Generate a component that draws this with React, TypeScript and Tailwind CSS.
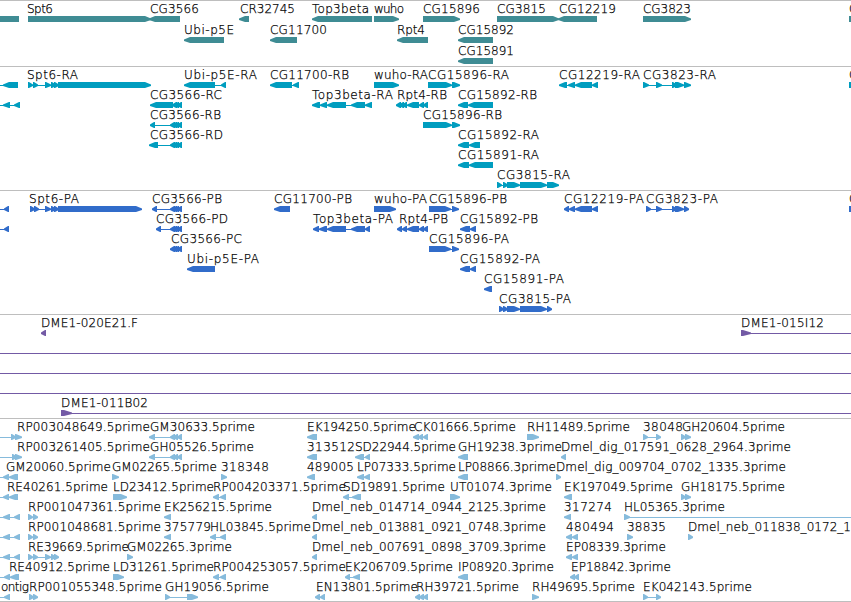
type Label = [x: number, width: number, text: string];
type Feature = [dir: 'l' | 'r' | 'n', ...exons: number[]];

interface Row {
  labels: Label[];
  features: Feature[];
}

interface Track {
  name: string;
  color: string;
  rowHeight: number;
  pad: number;
  tip: number;
  rows: Row[];
}

const TRACKS: Track[] = [
  {
    name: 'genes',
    color: '#3f8c94',
    rowHeight: 21,
    pad: 3,
    tip: 6,
    rows: [
      {
        labels: [[27, 26, 'Spt6'], [150, 49, 'CG3566'], [240, 55, 'CR32745'], [312, 57, 'Top3beta'], [374, 30, 'wuho'], [423, 57, 'CG15896'], [497, 49, 'CG3815'], [559, 57, 'CG12219'], [643, 48, 'CG3823'], [849, 8, 'C']],
        features: [['n', -10, 19], ['r', 28, 151], ['l', 149, 180], ['l', 239, 249], ['l', 312, 372], ['r', 374, 399], ['r', 423, 460], ['r', 497, 559], ['l', 558, 597], ['r', 643, 691], ['n', 849, 860]],
      },
      {
        labels: [[184, 50, 'Ubi-p5E'], [270, 57, 'CG11700'], [397, 28, 'Rpt4'], [458, 56, 'CG15892']],
        features: [['l', 184, 224], ['l', 270, 297], ['l', 397, 428], ['l', 458, 493]],
      },
      {
        labels: [[458, 56, 'CG15891']],
        features: [['l', 458, 493]],
      },
    ],
  },
  {
    name: 'transcripts',
    color: '#009dbf',
    rowHeight: 20,
    pad: 4,
    tip: 6,
    rows: [
      {
        labels: [[27, 51, 'Spt6-RA'], [184, 73, 'Ubi-p5E-RA'], [270, 79, 'CG11700-RB'], [374, 54, 'wuho-RA'], [428, 81, 'CG15896-RA'], [559, 81, 'CG12219-RA'], [643, 73, 'CG3823-RA'], [849, 8, 'C']],
        features: [['l', -6, -1, 3, 18], ['r', 28, 33, 33, 38, 45, 51, 51, 54, 54, 58, 58, 151], ['l', 184, 215, 221, 226], ['l', 270, 292, 293, 299], ['r', 374, 399], ['r', 428, 452, 452, 460], ['l', 559, 567, 568, 575, 575, 592, 592, 598], ['r', 643, 649, 656, 662, 672, 676, 675, 684, 684, 691], ['r', 849, 858]],
      },
      {
        labels: [[150, 72, 'CG3566-RC'], [312, 81, 'Top3beta-RA'], [397, 50, 'Rpt4-RB'], [458, 79, 'CG15892-RB']],
        features: [['l', -6, -1, 3, 10, 14, 20], ['l', 150, 173, 173, 177, 177, 179, 179, 182], ['l', 312, 320, 320, 327, 327, 346, 351, 365, 365, 372], ['l', 397, 401, 401, 404, 404, 407, 407, 419, 419, 424, 424, 428], ['l', 458, 468, 468, 493]],
      },
      {
        labels: [[150, 71, 'CG3566-RB'], [423, 79, 'CG15896-RB']],
        features: [['l', 150, 155, 171, 175, 175, 177, 177, 179, 179, 182], ['r', 423, 452, 452, 460]],
      },
      {
        labels: [[150, 73, 'CG3566-RD'], [458, 81, 'CG15892-RA']],
        features: [['l', 149, 158, 171, 175, 175, 177, 177, 179, 179, 182], ['l', 458, 469, 469, 480]],
      },
      {
        labels: [[458, 81, 'CG15891-RA']],
        features: [['l', 458, 469, 469, 493]],
      },
      {
        labels: [[497, 73, 'CG3815-RA']],
        features: [['r', 497, 502, 503, 507, 507, 520, 520, 547, 547, 559]],
      },
    ],
  },
  {
    name: 'proteins',
    color: '#316cca',
    rowHeight: 20,
    pad: 4,
    tip: 6,
    rows: [
      {
        labels: [[29, 50, 'Spt6-PA'], [152, 70, 'CG3566-PB'], [274, 78, 'CG11700-PB'], [374, 53, 'wuho-PA'], [429, 78, 'CG15896-PB'], [564, 80, 'CG12219-PA'], [646, 72, 'CG3823-PA'], [849, 8, 'C']],
        features: [['l', -5, -1, 4, 9], ['r', 30, 34, 34, 38, 45, 51, 51, 54, 54, 58, 58, 142], ['l', 152, 157, 171, 175, 175, 177, 177, 179, 179, 182], ['l', 274, 290], ['r', 374, 396], ['r', 429, 451, 452, 459], ['l', 564, 569, 569, 575, 575, 592, 592, 598], ['r', 646, 651, 656, 662, 672, 676, 675, 684, 684, 689], ['r', 849, 858]],
      },
      {
        labels: [[156, 72, 'CG3566-PD'], [313, 80, 'Top3beta-PA'], [399, 49, 'Rpt4-PB'], [460, 78, 'CG15892-PB']],
        features: [['l', -5, -1, 4, 9], ['l', 156, 161, 171, 175, 175, 177, 177, 179, 179, 182], ['l', 313, 319, 319, 327, 327, 346, 351, 365, 365, 370], ['l', 399, 402, 402, 407, 407, 419, 419, 424, 424, 428], ['l', 460, 470, 470, 476]],
      },
      {
        labels: [[171, 71, 'CG3566-PC'], [429, 80, 'CG15896-PA']],
        features: [['l', 171, 175, 175, 177, 177, 179, 179, 182], ['r', 429, 451, 452, 459]],
      },
      {
        labels: [[187, 72, 'Ubi-p5E-PA'], [460, 80, 'CG15892-PA']],
        features: [['l', 187, 215], ['l', 460, 470, 470, 476]],
      },
      {
        labels: [[484, 80, 'CG15891-PA']],
        features: [['l', 484, 492]],
      },
      {
        labels: [[499, 72, 'CG3815-PA']],
        features: [['r', 499, 503, 503, 507, 507, 520, 520, 547, 547, 552]],
      },
    ],
  },
  {
    name: 'clones',
    color: '#735aa5',
    rowHeight: 20,
    pad: 4,
    tip: 8,
    rows: [
      {
        labels: [[41, 97, 'DME1-020E21.F'], [741, 83, 'DME1-015I12']],
        features: [['l', 41, 46], ['r', 741, 751, 870, 880]],
      },
      { labels: [], features: [['n', -20, -10, 870, 880]] },
      { labels: [], features: [['n', -20, -10, 870, 880]] },
      { labels: [], features: [['n', -20, -10, 870, 880]] },
      {
        labels: [[61, 87, 'DME1-011B02']],
        features: [['r', 61, 72, 870, 880]],
      },
    ],
  },
  {
    name: 'ests',
    color: '#86bbdc',
    rowHeight: 20,
    pad: 3,
    tip: 6,
    rows: [
      {
        labels: [[17, 133, 'RP003048649.5prime'], [150, 105, 'GM30633.5prime'], [307, 109, 'EK194250.5prime'], [414, 102, 'CK01666.5prime'], [527, 103, 'RH11489.5prime'], [643, 40, '38048'], [682, 103, 'GH20604.5prime']],
        features: [['r', -10, -4, 11, 15, 15, 22], ['l', 149, 155, 171, 175, 175, 178, 178, 182], ['l', 307, 317], ['l', 413, 419, 419, 423, 423, 428], ['r', 527, 539], ['r', 643, 648, 656, 661], ['r', 681, 685, 685, 691]],
      },
      {
        labels: [[17, 133, 'RP003261405.5prime'], [150, 104, 'GH05526.5prime'], [307, 48, '313512'], [355, 101, 'SD22944.5prime'], [458, 104, 'GH19238.3prime'], [561, 230, 'Dmel_dig_017591_0628_2964.3prime']],
        features: [['r', -10, -4, 12, 15, 15, 22], ['l', 149, 155, 171, 175, 175, 178, 178, 182], ['l', 307, 317], ['l', 355, 364, 365, 370], ['l', 458, 468], ['l', 561, 566]],
      },
      {
        labels: [[6, 105, 'GM20060.5prime'], [112, 105, 'GM02265.5prime'], [221, 48, '318348'], [307, 47, '489005'], [357, 99, 'LP07333.5prime'], [458, 98, 'LP08866.3prime'], [556, 230, 'Dmel_dig_009704_0702_1335.3prime']],
        features: [['l', -10, -4, 3, 9, 9, 18], ['r', 112, 119], ['r', 221, 227], ['l', 307, 315], ['l', 357, 364, 364, 370], ['l', 458, 468], ['r', 556, 561]],
      },
      {
        labels: [[7, 101, 'RE40261.5prime'], [113, 101, 'LD23412.5prime'], [213, 133, 'RP004203371.5prime'], [343, 102, 'SD19891.5prime'], [450, 102, 'UT01074.3prime'], [564, 109, 'EK197049.5prime'], [681, 104, 'GH18175.5prime']],
        features: [['l', -10, -4, 3, 9, 9, 18], ['r', 113, 127], ['l', 213, 219, 220, 226], ['l', 343, 349, 352, 361], ['r', 450, 460], ['l', 564, 572], ['r', 681, 685, 685, 691]],
      },
      {
        labels: [[28, 133, 'RP001047361.5prime'], [164, 108, 'EK256215.5prime'], [312, 234, 'Dmel_neb_014714_0944_2125.3prime'], [564, 48, '317274'], [624, 101, 'HL05365.3prime']],
        features: [['l', -10, -4, 3, 10, 14, 20], ['r', 28, 33, 33, 38], ['l', 164, 171], ['l', 312, 317], ['l', 564, 571], ['r', 624, 630, 870, 880]],
      },
      {
        labels: [[28, 133, 'RP001048681.5prime'], [164, 47, '375779'], [210, 101, 'HL03845.5prime'], [312, 234, 'Dmel_neb_013881_0921_0748.3prime'], [566, 48, '480494'], [627, 39, '38835'], [688, 163, 'Dmel_neb_011838_0172_1']],
        features: [['l', -10, -4, 3, 10, 14, 20], ['r', 28, 33, 33, 38], ['l', 164, 171], ['l', 210, 216, 220, 226], ['l', 312, 317], ['l', 566, 572, 572, 578], ['r', 627, 633], ['r', 688, 693]],
      },
      {
        labels: [[28, 101, 'RE39669.5prime'], [127, 105, 'GM02265.3prime'], [312, 234, 'Dmel_neb_007691_0898_3709.3prime'], [566, 100, 'EP08339.3prime']],
        features: [['l', -10, -4, 3, 10, 14, 20], ['r', 28, 33, 33, 38, 45, 51, 51, 54, 54, 59], ['r', 127, 133], ['l', 312, 317], ['l', 566, 572, 572, 578]],
      },
      {
        labels: [[9, 101, 'RE40912.5prime'], [113, 101, 'LD31261.5prime'], [213, 133, 'RP004253057.5prime'], [345, 108, 'EK206709.5prime'], [458, 96, 'IP08920.3prime'], [571, 100, 'EP18842.3prime']],
        features: [['l', -10, -4, 4, 10, 10, 19], ['r', 113, 124], ['l', 213, 219, 220, 226], ['l', 345, 350, 353, 360], ['l', 458, 468], ['l', 571, 575, 575, 579]],
      },
      {
        labels: [[1, 28, 'ontig'], [29, 133, 'RP001055348.5prime'], [165, 104, 'GH19056.5prime'], [316, 102, 'EN13801.5prime'], [416, 103, 'RH39721.5prime'], [532, 103, 'RH49695.5prime'], [643, 109, 'EK042143.5prime']],
        features: [['l', -10, -4, 4, 10], ['r', 29, 33, 33, 38], ['r', 165, 170, 187, 198], ['l', 316, 320, 320, 325], ['l', 416, 420, 420, 424, 424, 428], ['r', 532, 539], ['r', 643, 648, 656, 661]],
      },
    ],
  },
];

// very short exons still get a readable arrow head
const MIN_EXON = 5;

function exonPoints(dir: string, a: number, b: number, tip: number) {
  if (dir === 'l') {
    const x = Math.min(a, b - MIN_EXON);
    const t = Math.min(tip, b - x - 1);
    return `${x},18.5 ${x + t},16 ${b},16 ${b},22 ${x + t},22 ${x},20`;
  }
  if (dir === 'r') {
    const x = Math.max(b, a + MIN_EXON);
    const t = Math.min(tip, x - a - 1);
    return `${a},16 ${x - t},16 ${x},18.5 ${x},20 ${x - t},22 ${a},22`;
  }
  return `${a},16 ${b},16 ${b},22 ${a},22`;
}

function FeatureShape({ feature, tip }: { feature: Feature; tip: number }) {
  const [dir, ...pos] = feature;
  const exons: [number, number][] = [];
  for (let i = 0; i < pos.length; i += 2) exons.push([pos[i], pos[i + 1]]);
  const start = pos[0] + 2;
  const end = pos[pos.length - 1] - 2;

  return (
    <g>
      {exons.length > 1 && <rect x={start} y={19} width={end - start} height={1} shapeRendering="crispEdges" />}
      {exons.map(([a, b], i) => (
        <polygon key={i} points={exonPoints(dir, a, b, tip)} />
      ))}
    </g>
  );
}

function TrackRow({ row, track }: { row: Row; track: Track }) {
  return (
    <svg width={851} height={track.rowHeight} fill={track.color} className="block overflow-visible">
      {row.features.map((f, i) => (
        <FeatureShape key={i} feature={f} tip={track.tip} />
      ))}
      {row.labels.map(([x, width, text]) => (
        <text key={text} x={x} y={13} textLength={width} fill="#000" stroke="#000" strokeWidth={0.25}>
          {text}
        </text>
      ))}
    </svg>
  );
}

export default function App() {
  return (
    <main className="flex h-[602px] w-[851px] flex-col overflow-hidden bg-white font-['DejaVu_Sans',sans-serif] text-[12px] font-extralight">
      {TRACKS.map((track) => (
        <section key={track.name} className="shrink-0">
          <div className="-mb-px h-px bg-[#bebebe]" />
          {track.rows.map((row, i) => (
            <TrackRow key={i} row={row} track={track} />
          ))}
          <div style={{ height: track.pad }} />
        </section>
      ))}
      <div className="h-px shrink-0 bg-[#bebebe]" />
    </main>
  );
}
